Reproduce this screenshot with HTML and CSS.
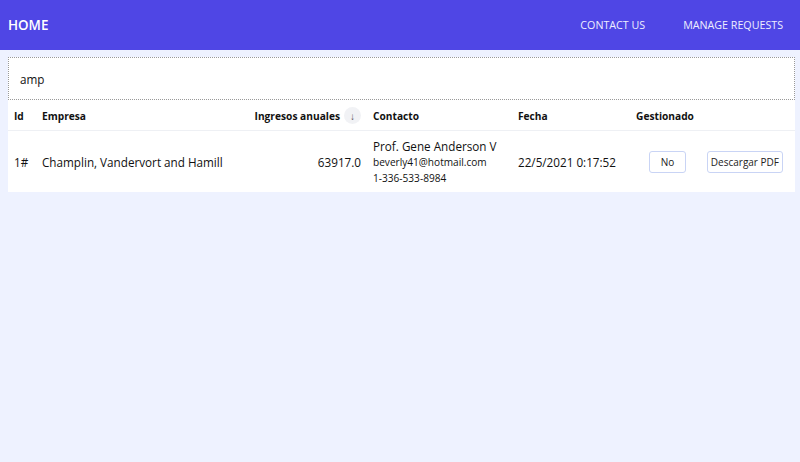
FILE: index.html
```html
<!DOCTYPE html>
<html>
<head>
<meta charset="utf-8">
<link rel="stylesheet" href="styles.css">
</head>
<body>
<nav class="nav">
  <a class="brand">HOME</a>
  <div class="links">
    <a class="link">CONTACT US</a>
    <a class="link">MANAGE REQUESTS</a>
  </div>
</nav>
<main class="main">
  <div class="search">amp</div>
  <table class="table">
    <colgroup>
      <col class="w-id"><col class="w-emp"><col class="w-ing"><col class="w-con"><col class="w-fec"><col class="w-ges"><col>
    </colgroup>
    <thead>
      <tr>
        <th>Id</th>
        <th>Empresa</th>
        <th class="right"><span class="ing">Ingresos anuales <span class="sort">↓</span></span></th>
        <th>Contacto</th>
        <th>Fecha</th>
        <th>Gestionado</th>
        <th></th>
      </tr>
    </thead>
    <tbody>
      <tr>
        <td>1#</td>
        <td>Champlin, Vandervort and Hamill</td>
        <td class="right">63917.0</td>
        <td>
          <div class="name">Prof. Gene Anderson V</div>
          <div class="small">beverly41@hotmail.com</div>
          <div class="small">1-336-533-8984</div>
        </td>
        <td>22/5/2021 0:17:52</td>
        <td class="ges"><button class="btn btn-no">No</button></td>
        <td class="right pdf"><button class="btn">Descargar PDF</button></td>
      </tr>
    </tbody>
  </table>
</main>
</body>
</html>
```
FILE: styles.css
```css
html, body { margin: 0; padding: 0; }
body {
  background: #eef2ff;
  font-family: "Open Sans", "Noto Sans", sans-serif;
  color: #111;
  width: 800px;
  height: 462px;
}
.nav {
  height: 50px;
  background: #4f46e5;
  display: flex;
  align-items: center;
  justify-content: space-between;
  padding: 0 17px 0 8px;
}
.brand {
  color: #fff;
  font-weight: 600;
  font-size: 13.4px;
}
.links { display: flex; gap: 38px; }
.link {
  color: #eef;
  font-size: 10.7px;
}
.main {
  margin: 7px 5px 0 8px;
}
.search {
  height: 43px;
  box-sizing: border-box;
  border: 1px dotted #999;
  background: #fff;
  padding: 0 11px;
  display: flex;
  align-items: center;
  font-size: 11.7px;
}
.table {
  width: 100%;
  table-layout: fixed;
  border-collapse: collapse;
  background: #fff;
}
.w-id { width: 28px; }
.w-emp { width: 209px; }
.w-ing { width: 122px; }
.w-con { width: 145px; }
.w-fec { width: 118px; }
.w-ges { width: 70px; }
th, td { padding: 0 6px; }
th {
  height: 29px;
  padding-top: 1px;
  font-size: 10.2px;
  font-weight: 700;
  text-align: left;
  border-bottom: 1px solid #eef0f4;
  white-space: nowrap;
}
td {
  height: 61px;
  font-size: 11.7px;
  vertical-align: middle;
}
.right { text-align: right; }
th.right { padding-right: 6px; }
.ing { display: inline-flex; align-items: center; gap: 4px; }
.sort {
  display: inline-flex;
  align-items: center;
  justify-content: center;
  width: 17px; height: 17px;
  border-radius: 50%;
  background: #f1f2f5;
  color: #555;
  font-weight: 400;
  font-size: 10px;
}
.name { font-size: 11.7px; line-height: 16px; }
.small { font-size: 10.1px; line-height: 16px; }
.ges { padding-left: 19px; }
.pdf { padding-right: 12px; }
.btn {
  font-family: inherit;
  font-size: 10px;
  background: #fff;
  border: 1px solid #c9d4f5;
  border-radius: 3px;
  height: 22px;
  padding: 0 3px;
  color: #222;
  white-space: nowrap;
}
.btn-no { width: 37px; }
```
